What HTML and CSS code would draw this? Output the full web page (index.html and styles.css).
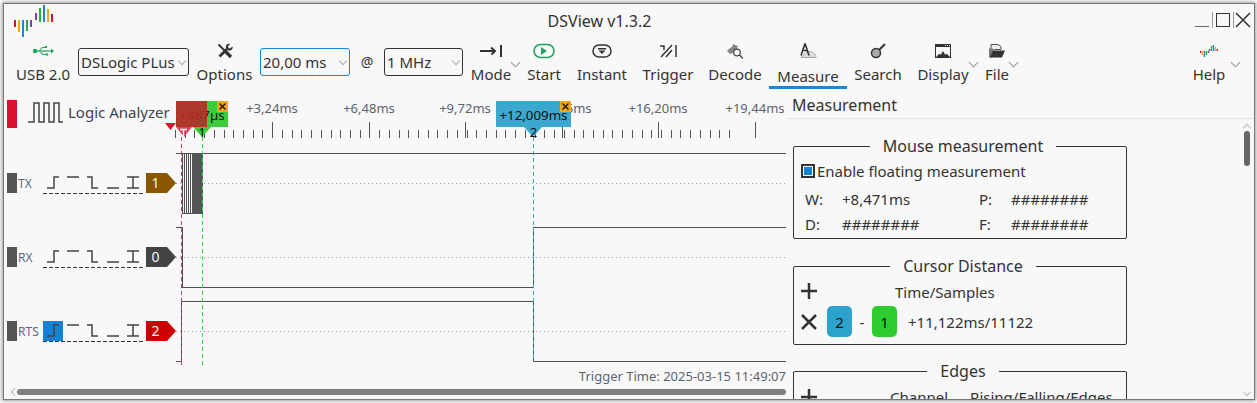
FILE: index.html
```html
<!DOCTYPE html>
<html lang="en">
<head>
  <meta charset="UTF-8">
  <title>DSView v1.3.2</title>
  <link rel="stylesheet" href="styles.css">
</head>
<body>
  <div class="window">
    <header class="titlebar">
      <svg class="logo" viewBox="13 5 40 33" width="40" height="33">
        <g fill="none" stroke-width="2">
          <path stroke="#d8122f" d="M15 20v7M52 14v8"/>
          <path stroke="#f0a814" d="M19 20v12M48 9v13"/>
          <path stroke="#1a86d8" d="M23 20v17M44 5v17"/>
          <path stroke="#2ea84a" d="M27 20v11M40 8v14"/>
          <path stroke="#7a3fa8" d="M31 20v7M36 13v7"/>
        </g>
      </svg>
      <div class="title">DSView v1.3.2</div>
      <div class="winctl">
        <svg viewBox="1195 10 56 20" width="56" height="20">
          <path d="M1195 26.500h14" stroke="#666" fill="none"/>
          <path d="M1212.500 12v16M1233.500 12v16" stroke="#999" fill="none"/>
          <rect x="1216.500" y="13.500" width="13" height="13" fill="none" stroke="#333"/>
          <path d="M1236 13l14 14M1250 13l-14 14" stroke="#333" stroke-width="1.500" fill="none"/>
        </svg>
      </div>
    </header>

    <nav class="toolbar">
      <div class="tool tool-usb">
        <svg class="icon" viewBox="0 0 24 16" width="24" height="16"><g fill="#1fa35f"><circle cx="4" cy="8" r="2.200"/><rect x="4" y="7.400" width="16" height="1.200"/><path d="M20 5.500l3 2.500-3 2.500z"/><path d="M8 7.500l3-3.500h3v1h-2.500l-3 3zM10 8.500l2 2.500h3v1h-3.500l-2.500-3z"/><rect x="14" y="3" width="2" height="2"/><circle cx="16" cy="11.500" r="1.200"/></g></svg>
        <span>USB 2.0</span>
      </div>
      <div class="combo"><span>DSLogic PLus</span><i class="chev"></i></div>
      <div class="tool">
        <svg class="icon" viewBox="0 0 16 16" width="16" height="16"><path d="M1.500 1.500L8 8" fill="none" stroke="#333" stroke-width="1.800"/><path d="M8 8l6 6" fill="none" stroke="#333" stroke-width="3.400"/><path d="M2.500 13.500L10 6" fill="none" stroke="#333" stroke-width="2.800"/><path d="M15.500 3.500l-2.800 2.200-2-2L13 1C10.200 .2 8.200 2.500 9 5l2.500 2.500c2.500.700 4.800-1.300 4-4z" fill="#333"/></svg>
        <span>Options</span>
      </div>
      <div class="combo combo-active"><span>20,00 ms</span><i class="chev"></i></div>
      <div class="at">@</div>
      <div class="combo"><span>1 MHz</span><i class="chev"></i></div>
      <div class="tool has-menu">
        <svg class="icon" viewBox="0 0 22 14" width="22" height="14"><path d="M0 7h15M11 3.500L15 7l-3.500 3.500M21 1v12" fill="none" stroke="#333" stroke-width="2"/></svg>
        <span>Mode</span>
      </div>
      <div class="tool">
        <svg class="icon" viewBox="0 0 22 15" width="22" height="15"><rect x="1" y="1" width="20" height="13" rx="6.500" fill="none" stroke="#1fa35f" stroke-width="1.500"/><path d="M8 3.500l6 4-6 4z" fill="#1fa35f"/></svg>
        <span>Start</span>
      </div>
      <div class="tool">
        <svg class="icon" viewBox="0 0 20 14" width="20" height="14"><rect x="1" y="1" width="18" height="12" rx="6" fill="none" stroke="#333" stroke-width="1.500"/><path d="M6 4h8v1.500H6zM6.500 6.500h7L10 10z" fill="#333"/></svg>
        <span>Instant</span>
      </div>
      <div class="tool">
        <svg class="icon" viewBox="0 0 18 14" width="18" height="14"><path d="M2 13L13 1M7 13l6-7M1 2h4v4M17 1v12" fill="none" stroke="#333" stroke-width="1.500"/></svg>
        <span>Trigger</span>
      </div>
      <div class="tool">
        <svg class="icon" viewBox="0 0 16 16" width="16" height="16"><path d="M0 8l3-3 2-1 1-3 2 1 3 1-1 2 1 3-3 3-3-1-2 1z" fill="#888"/><circle cx="10" cy="9.500" r="3.300" fill="#f8f8f8" stroke="#444" stroke-width="1.200"/><path d="M12.500 12L16 15.500" stroke="#444" stroke-width="1.300"/></svg>
        <span>Decode</span>
      </div>
      <div class="tool tool-active">
        <svg class="icon" viewBox="0 0 18 16" width="18" height="16"><path d="M2 15c2-1 4-7 9-6 4 1 6 3 6 6z" fill="#ddd" stroke="#aaa"/><path d="M6 1L2 13M6 1l4 12M4 8h4" fill="none" stroke="#333" stroke-width="1.600"/></svg>
        <span>Measure</span>
      </div>
      <div class="tool">
        <svg class="icon" viewBox="0 0 16 16" width="16" height="16"><path d="M9 7l6-6" stroke="#333" stroke-width="2"/><circle cx="6" cy="10" r="4.500" fill="#aaa" stroke="#333" stroke-width="1.500"/></svg>
        <span>Search</span>
      </div>
      <div class="tool has-menu">
        <svg class="icon" viewBox="0 0 16 14" width="16" height="14"><rect width="16" height="14" fill="#333"/><rect x="1" y="3" width="14" height="10" fill="#f8f8f8"/><path d="M10 1h1v1h-1zM12 1h1v1h-1zM14 1h1v1h-1z" fill="#eee"/><path d="M1 13l3-3 2 .5L8 7l2 3.500 2-.5 3 3z" fill="#333"/></svg>
        <span>Display</span>
      </div>
      <div class="tool has-menu">
        <svg class="icon" viewBox="0 0 16 15" width="16" height="15"><path d="M2 9V1h7l3 2v3H5z" fill="#eee" stroke="#555"/><path d="M0 5h4v9h-4z" fill="#777"/><path d="M4 7h12l-3 7H1z" fill="#333"/></svg>
        <span>File</span>
      </div>
      <div></div>
      <div class="tool has-menu">
        <svg class="icon" viewBox="0 0 18 14" width="18" height="14"><g fill="none" stroke-width="1.400"><path stroke="#d8122f" d="M.7 7v2M17.300 5v2"/><path stroke="#f0a814" d="M2.500 7v4M15.500 3v4"/><path stroke="#1a86d8" d="M4.500 7v6M13.500 1v6"/><path stroke="#2ea84a" d="M6.500 7v4M11.500 2v5"/><path stroke="#7a3fa8" d="M8.500 7v2M9.500 5v2"/></g></svg>
        <span>Help</span>
      </div>
    </nav>

    <main class="workspace">
      <section class="view">
        <svg class="canvas" viewBox="4 96 782 289" width="782" height="289">
          <defs>
            <g id="edges">
              <path d="M47 15h7V4h5M67 4h12M87 4h5v11h6M107 15h12M127 4h12M133 4v11M127 15h12" fill="none" stroke="#444" stroke-width="1.500"/>
              <path d="M43 20.500h100" fill="none" stroke="#333" stroke-dasharray="4 2"/>
              <rect x="7" width="10" height="20" fill="#555"/>
            </g>
          </defs>

          <rect x="7" y="100" width="10" height="28" fill="#d8122f"/>
          <path d="M28 122h6V103h5v19h5V103h5v19h5V103h5v19h4" fill="none" stroke="#444" stroke-width="1.500"/>
          <text class="lbl" x="68" y="118">Logic Analyzer</text>

          <g class="ruler">
            <text x="272" y="113">+3,24ms</text>
            <text x="369" y="113">+6,48ms</text>
            <text x="465" y="113">+9,72ms</text>
            <text x="562" y="113">+12,96ms</text>
            <text x="658" y="113">+16,20ms</text>
            <text x="755" y="113">+19,44ms</text>
          </g>
          <path class="ticks" d="M272.500 122v16M369.500 122v16M465.500 122v16M562.500 122v16M658.500 122v16M755.500 122v16"/>
          <path class="ticks" d="M175.500 130v8m9.720-8v8m9.720-8v8m9.720-8v8m9.720-8v8m9.720-8v8m9.720-8v8m9.720-8v8m9.720-8v8m9.720-8v8m9.720-8v8m9.720-8v8m9.720-8v8m9.720-8v8m9.720-8v8m9.720-8v8m9.720-8v8m9.720-8v8m9.720-8v8m9.720-8v8m9.720-8v8m9.720-8v8m9.720-8v8m9.720-8v8m9.720-8v8m9.720-8v8m9.720-8v8m9.720-8v8m9.720-8v8m9.720-8v8m9.720-8v8m9.720-8v8m9.720-8v8m9.720-8v8m9.720-8v8m9.720-8v8m9.720-8v8m9.720-8v8m9.720-8v8m9.720-8v8m9.720-8v8m9.720-8v8m9.720-8v8m9.720-8v8m9.720-8v8m9.720-8v8m9.720-8v8m9.720-8v8m9.720-8v8m9.720-8v8m9.720-8v8m9.720-8v8m9.720-8v8m9.720-8v8m9.720-8v8m9.720-8v8m9.720-8v8m9.720-8v8"/>

          <!-- channels -->
          <use href="#edges" y="173"/>
          <use href="#edges" y="247"/>
          <rect x="43" y="321" width="20" height="20" fill="#1283d4"/>
          <use href="#edges" y="321"/>
          <text class="chname" x="18" y="188">TX</text>
          <text class="chname" x="18" y="262">RX</text>
          <text class="chname" x="18" y="336">RTS</text>
          <path d="M146 173h21l9 10-9 10h-21z" fill="#8a5600"/>
          <path d="M146 247h21l9 10-9 10h-21z" fill="#444"/>
          <path d="M146 321h21l9 10-9 10h-21z" fill="#cc0000"/>
          <text class="tagnum" x="155.500" y="188">1</text>
          <text class="tagnum" x="155.500" y="262">0</text>
          <text class="tagnum" x="155.500" y="336">2</text>

          <path class="mid" d="M176 183.500h610M176 257.500h610M176 331.500h610"/>

          <!-- traces -->
          <path class="wave" d="M176 153.500h610M182.500 153v60M184.500 153v60M186.500 153v60M188.500 153v60M190.500 153v60M182 213.500h10"/>
          <rect x="192" y="153" width="11" height="61" fill="#555"/>
          <path class="wave" d="M176 227.500h6.500v60h351v-60h252.500"/>
          <path class="wave" d="M176 361.500h5.500v-60h352v60h252.500"/>

          <path class="cur" stroke="#c0485a" d="M181.500 137v228"/>
          <path class="cur" stroke="#33dd33" d="M202.500 137v228"/>
          <path class="cur" stroke="#3ca8cf" d="M533.500 137v225"/>

          <!-- cursor flags -->
          <rect x="176" y="101" width="52" height="26" fill="#3ccd3c"/>
          <path d="M193 127h18l-9 10z" fill="#3ccd3c"/>
          <text class="flag" x="202" y="120">+887µs</text>
          <rect x="217" y="101" width="11" height="11" fill="#f0a814"/>
          <path class="closex" d="M219.500 103.500l6 6M225.500 103.500l-6 6"/>
          <text class="curnum" x="202" y="137">1</text>

          <rect x="176" y="101" width="31" height="26" fill="#b82c2a" fill-opacity=".92"/>
          <path d="M176 127h16l-8 10z" fill="#e0405a"/>
          <path d="M180 129.500h7M183.500 129.500v7" stroke="#fff" stroke-width="1.300" fill="none"/>
          <path d="M165 123h11l-5.500 7z" fill="#d8122f"/>

          <rect x="496" y="101" width="75" height="26" fill="#3ca8cf"/>
          <path d="M524 127h18l-9 10z" fill="#3ca8cf"/>
          <text class="flag" x="533.500" y="120">+12,009ms</text>
          <rect x="560" y="101" width="11" height="11" fill="#f0a814"/>
          <path class="closex" d="M562.500 103.500l6 6M568.500 103.500l-6 6"/>
          <text class="curnum" x="533.500" y="137">2</text>

          <text class="trigtime" x="786" y="381">Trigger Time: 2025-03-15 11:49:07</text>
        </svg>
        <div class="hscroll">
          <i class="arrow-left"></i>
          <div class="hthumb"></div>
        </div>
      </section>

      <aside class="dock">
        <h2 class="dock-title">Measurement</h2>
        <div class="dock-body">
          <fieldset class="group group-mouse">
            <legend>Mouse measurement</legend>
            <div class="check"><i class="box"></i>Enable floating measurement</div>
            <div class="readout">
              <span>W:</span><span>+8,471ms</span><span>P:</span><span>########</span>
              <span>D:</span><span>########</span><span>F:</span><span>########</span>
            </div>
          </fieldset>

          <fieldset class="group group-cursor">
            <legend>Cursor Distance</legend>
            <div class="row row-head">
              <svg class="sym" viewBox="0 0 16 16" width="16" height="16"><path d="M8 0v16M0 8h16" stroke="#333" stroke-width="2.500"/></svg>
              <span class="heading-time">Time/Samples</span>
            </div>
            <div class="row row-dist">
              <svg class="sym" viewBox="0 0 16 16" width="16" height="16"><path d="M1 1l14 14M15 1L1 15" stroke="#333" stroke-width="2.500"/></svg>
              <span class="badge badge-blue">2</span>
              <span class="minus">-</span>
              <span class="badge badge-green">1</span>
              <span class="dist">+11,122ms/11122</span>
            </div>
          </fieldset>

          <fieldset class="group group-edges">
            <legend>Edges</legend>
            <div class="row">
              <svg class="sym" viewBox="0 0 16 16" width="16" height="16"><path d="M8 0v16M0 8h16" stroke="#333" stroke-width="2.500"/></svg>
              <span class="heading-ch">Channel</span>
              <span>Rising/Falling/Edges</span>
            </div>
          </fieldset>

          <div class="vscroll">
            <i class="arrow-up"></i>
            <div class="vthumb"></div>
            <i class="arrow-down"></i>
          </div>
        </div>
      </aside>
    </main>
  </div>
</body>
</html>
```
FILE: styles.css
```css
* {
  box-sizing: border-box;
}
html, body {
  margin: 0;
  padding: 0;
  background: #fff;
}
body {
  width: 1257px;
  height: 403px;
  overflow: hidden;
  padding: 4px 3px 4px 4px;
  font-family: "Noto Sans", sans-serif;
  font-size: 15px;
  color: #333;
}
.window {
  width: 1250px;
  height: 395px;
  background: #f8f8f8;
  outline: 1px solid #777;
  box-shadow: 0 0 4px 2px #999;
  overflow: hidden;
  display: flex;
  flex-direction: column;
}

/* title bar */
.titlebar {
  height: 34px;
  flex: none;
  display: grid;
  grid-template-columns: 1fr auto 1fr;
  align-items: center;
  padding-left: 9px;
  padding-right: 3px;
}
.logo {
  display: block;
}
.title {
  font-size: 16px;
  color: #333;
  margin-right: 65px;
}
.winctl {
  justify-self: end;
  align-self: start;
  height: 20px;
  margin-top: 6px;
}
.winctl svg {
  display: block;
}

/* toolbar */
.toolbar {
  height: 58px;
  flex: none;
  display: grid;
  grid-template-columns: 74px 111px 71px 90px 34px 79px 56px 50px 66px 66px 68px 78px 62px 68px 40px 1fr 60px 15px;
  align-items: start;
}
.tool {
  position: relative;
  height: 50px;
  display: flex;
  flex-direction: column;
  align-items: center;
  white-space: nowrap;
}
.tool-usb {
  padding-left: 4px;
}
.tool .icon {
  height: 18px;
  margin-top: 4px;
  margin-bottom: 4px;
  display: block;
}
.tool span {
  line-height: 20px;
}
.tool-active {
  height: 51px;
  border-bottom: 3px solid #1a86d8;
}
.tool-active span {
  margin-top: 3px;
  line-height: 20px;
}
.has-menu::after {
  content: "";
  position: absolute;
  right: 0;
  top: 21px;
  width: 6px;
  height: 6px;
  border-right: 1px solid #999;
  border-bottom: 1px solid #999;
  transform: rotate(45deg);
}
.combo {
  height: 28px;
  margin-top: 10px;
  border: 1px solid #333;
  border-radius: 3px;
  display: flex;
  align-items: center;
  justify-content: space-between;
  padding: 0 3px 0 2px;
  white-space: nowrap;
}
.combo-active {
  border-color: #1a86d8;
}
.chev {
  width: 6px;
  height: 6px;
  border-right: 1px solid #aaa;
  border-bottom: 1px solid #aaa;
  transform: rotate(45deg);
  margin-top: -3px;
  flex: none;
}
.at {
  text-align: center;
  line-height: 28px;
  margin-top: 10px;
  font-size: 14px;
}

/* main area */
.workspace {
  flex: 1;
  min-height: 0;
  display: flex;
}
.view {
  width: 782px;
  flex: none;
  display: flex;
  flex-direction: column;
}
.canvas {
  display: block;
  flex: none;
}
.canvas text {
  font-family: "Noto Sans", sans-serif;
}
.lbl {
  font-size: 15px;
  fill: #3c4450;
}
.ruler text {
  font-size: 13px;
  fill: #5c6470;
  text-anchor: middle;
}
.ticks {
  fill: none;
  stroke: #555;
  shape-rendering: crispEdges;
}
.chname {
  font-size: 12px;
  fill: #5a6a80;
}
.tagnum {
  font-size: 14px;
  fill: #f4f4f4;
  text-anchor: middle;
}
.mid {
  fill: none;
  stroke: #999;
  stroke-dasharray: 1 3;
}
.wave {
  fill: none;
  stroke: #505050;
  shape-rendering: crispEdges;
}
.cur {
  fill: none;
  stroke-dasharray: 4 3;
  shape-rendering: crispEdges;
}
.flag {
  font-size: 13.300px;
  fill: #111;
  text-anchor: middle;
}
.closex {
  fill: none;
  stroke: #111;
  stroke-width: 1.300;
}
.curnum {
  font-size: 13px;
  fill: #111;
  text-anchor: middle;
}
.trigtime {
  font-size: 13px;
  fill: #5c6470;
  text-anchor: end;
}
.hscroll {
  height: 22px;
  position: relative;
  padding: 4px 0 0 13px;
}
.hthumb {
  height: 6px;
  border-radius: 3px;
  background: #808080;
}
.arrow-left {
  position: absolute;
  left: 8px;
  top: 4px;
  width: 6px;
  height: 6px;
  border-left: 1px solid #bbb;
  border-bottom: 1px solid #bbb;
  transform: rotate(45deg);
}

/* right dock */
.dock {
  flex: 1;
  min-width: 0;
  margin-top: -2px;
  display: flex;
  flex-direction: column;
  overflow: hidden;
}
.dock-title {
  margin: 0;
  height: 25px;
  flex: none;
  padding: 0 0 0 6px;
  font-size: 16px;
  font-weight: 400;
  line-height: 22px;
  border-bottom: 1px solid #e4e4e4;
}
.dock-body {
  position: relative;
  flex: 1;
  min-height: 0;
  padding: 16px 0 0 7px;
  overflow: hidden;
}
.group {
  width: 334px;
  margin: 0 0 16px;
  padding: 0 1px 0 7px;
  border: 1px solid #333;
  border-radius: 2px;
  min-width: 0;
}
.group legend {
  margin: 0 auto;
  padding: 0 13px;
  font-size: 16px;
  line-height: 22px;
}
.group-mouse {
  height: 104px;
}
.group-cursor {
  height: 90px;
  margin-bottom: 15px;
}
.group-edges {
  height: 60px;
}
.check {
  display: flex;
  align-items: center;
  height: 20px;
  margin-top: 4px;
}
.box {
  width: 14px;
  height: 14px;
  border: 2px solid #333;
  margin-right: 2px;
  padding: 1px;
  background: #1283d4;
  background-clip: content-box;
}
.readout {
  display: grid;
  grid-template-columns: 37px 137px 32px 1fr;
  grid-auto-rows: 25px;
  align-items: center;
  margin-top: 5px;
  margin-left: 4px;
}
.row {
  display: flex;
  align-items: center;
}
.sym {
  flex: none;
  display: block;
}
.row-head {
  margin-top: 4px;
  height: 20px;
}
.heading-time {
  margin-left: 78px;
  margin-top: 2px;
}
.row-dist {
  margin-top: 5px;
}
.badge {
  width: 25px;
  height: 31px;
  border-radius: 5px;
  display: flex;
  align-items: center;
  justify-content: center;
  color: #111;
}
.badge-blue {
  background: #2ca3cc;
  margin-left: 10px;
}
.badge-green {
  background: #2ecc2e;
}
.minus {
  width: 20px;
  text-align: center;
}
.dist {
  margin-left: 11px;
}
.heading-ch {
  margin-left: 73px;
  margin-right: 22px;
}
.group-edges .row {
  height: 20px;
  margin-top: 5px;
}
.vscroll {
  position: absolute;
  top: 0;
  right: 0;
  width: 14px;
  height: 100%;
}
.vthumb {
  position: absolute;
  left: 4px;
  top: 12px;
  width: 6px;
  height: 35px;
  border-radius: 3px;
  background: #666;
}
.arrow-up, .arrow-down {
  position: absolute;
  left: 4px;
  width: 6px;
  height: 6px;
  border-color: #bbb;
  border-style: solid;
  transform: rotate(45deg);
}
.arrow-up {
  top: 6px;
  border-width: 1px 0 0 1px;
}
.arrow-down {
  bottom: 4px;
  border-width: 0 1px 1px 0;
}
```
